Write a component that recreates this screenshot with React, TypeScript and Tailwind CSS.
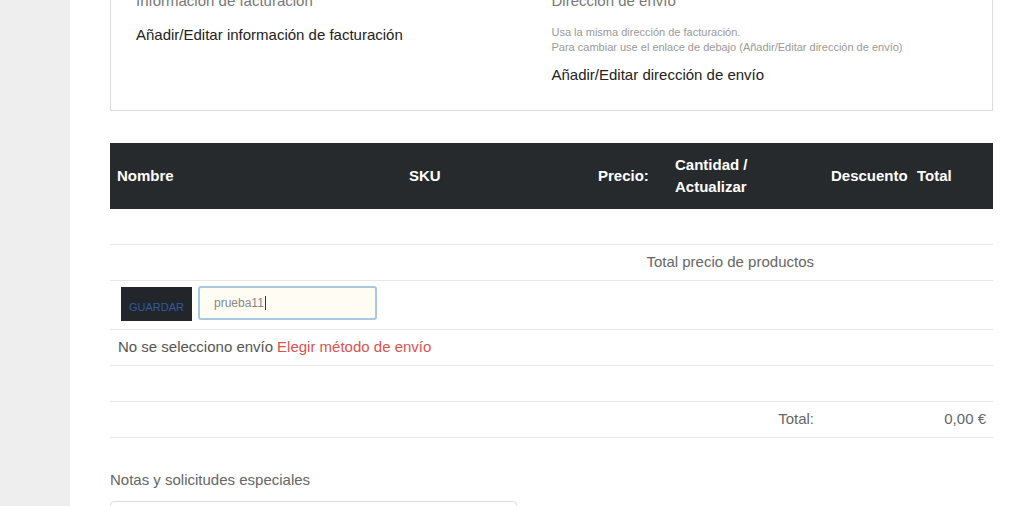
const font = { fontFamily: '"Liberation Sans", Arial, sans-serif' };

function HeaderCell({ children, className = '' }: { children: React.ReactNode; className?: string }) {
  return <div className={`flex items-center px-[7px] ${className}`}>{children}</div>;
}

export default function App() {
  return (
    <div className="flex h-[506px] w-[1023px] overflow-hidden bg-white text-[15px]" style={font}>
      {/* left gutter */}
      <div className="w-[70px] shrink-0 bg-[#eeeeee]" />

      <div className="flex-1 pl-[40px] pr-[30px] -mt-[12px]">
        {/* addresses box */}
        <div className="grid grid-cols-2 border border-[#dddddd] h-[123px]">
          <div className="pl-[25px] pt-[1px]">
            <div className="text-[#777] leading-[22px]">Información de facturación</div>
            <div className="mt-[12px] text-[#222] leading-[22px]">Añadir/Editar información de facturación</div>
          </div>
          <div className="pt-[1px]">
            <div className="text-[#777] leading-[22px]">Dirección de envío</div>
            <div className="mt-[13px] text-[11px] leading-[15px] text-[#999]">
              Usa la misma dirección de facturación.
              <br />
              Para cambiar use el enlace de debajo (Añadir/Editar dirección de envío)
            </div>
            <div className="mt-[9px] text-[#222] leading-[22px]">Añadir/Editar dirección de envío</div>
          </div>
        </div>

        {/* cart table */}
        <div className="mt-[32px]">
          <div className="grid h-[66px] grid-cols-[292px_189px_77px_156px_86px_83px] bg-[#272a2d] font-bold text-white">
            <HeaderCell>Nombre</HeaderCell>
            <HeaderCell>SKU</HeaderCell>
            <HeaderCell>Precio:</HeaderCell>
            <HeaderCell className="leading-[22px]">
              <span>
                Cantidad /
                <br />
                Actualizar
              </span>
            </HeaderCell>
            <HeaderCell>Descuento</HeaderCell>
            <HeaderCell>Total</HeaderCell>
          </div>

          <div className="h-[36px] border-b border-[#e8e8e8]" />

          <div className="flex h-[36px] items-center border-b border-[#e8e8e8]">
            <div className="w-[714px] pr-[10px] text-right text-[#666]">Total precio de productos</div>
          </div>

          <div className="flex h-[49px] items-start gap-[6px] border-b border-[#e8e8e8] pl-[11px] pt-[5px]">
            <button className="mt-[1px] flex h-[34px] w-[71px] items-end justify-center bg-[#22262a] pb-[8px] text-[11px] leading-none text-[#2f5aa0]">
              GUARDAR
            </button>
            <div className="flex h-[34px] w-[179px] items-center rounded-[3px] border-2 border-[#a9c8e3] bg-[#fffdf3] pl-[14px] text-[12px] text-[#888]">
              prueba11
              <span className="ml-[1px] inline-block h-[14px] w-px bg-[#333]" />
            </div>
          </div>

          <div className="flex h-[36px] items-center border-b border-[#e8e8e8] pl-[8px]">
            <span className="text-[#555]">No se selecciono envío</span>
            <span className="ml-[4px] text-[#d9534f]">Elegir método de envío</span>
          </div>

          <div className="h-[36px] border-b border-[#e8e8e8]" />

          <div className="flex h-[36px] items-center border-b border-[#e8e8e8]">
            <div className="w-[714px] pr-[10px] text-right text-[#666]">Total:</div>
            <div className="flex-1 pr-[7px] text-right text-[#666]">0,00 €</div>
          </div>
        </div>

        {/* notes */}
        <div className="mt-[31px] text-[#666]">Notas y solicitudes especiales</div>
        <div className="mt-[9px] h-[60px] w-[407px] rounded-[4px] border border-[#dddddd]" />
      </div>
    </div>
  );
}
